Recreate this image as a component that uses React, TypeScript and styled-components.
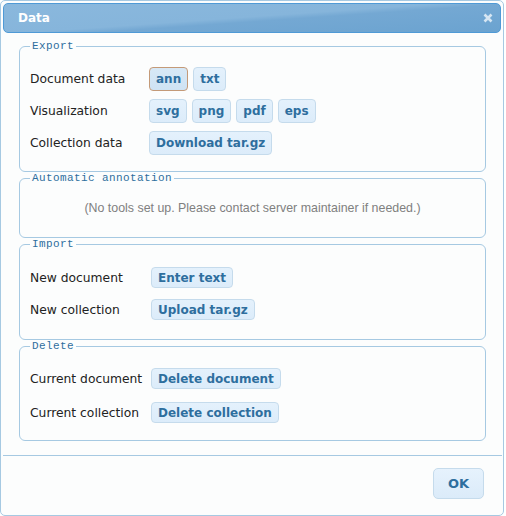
import React from "react";
import styled, { createGlobalStyle } from "styled-components";

const Global = createGlobalStyle`
  html, body { margin: 0; padding: 0; background: #ffffff; }
  body { font-family: "DejaVu Sans", Verdana, sans-serif; }
`;

const Dialog = styled.div`
  box-sizing: border-box;
  width: 504px;
  height: 516px;
  border: 1px solid #a6c9e2;
  border-radius: 5px;
  background: #fcfdfd;
  padding: 2px;
  display: flex;
  flex-direction: column;
`;

const TitleBar = styled.div`
  box-sizing: border-box;
  height: 30px;
  border: 1px solid #4f9ad6;
  border-radius: 5px;
  background: linear-gradient(176deg, #8ab8dd 0%, #86b5db 48%, #74a8d3 56%, #6ba3d0 100%);
  display: flex;
  align-items: center;
  justify-content: space-between;
  padding: 0 6px 0 14px;
`;

const Title = styled.span`
  color: #ffffff;
  font-weight: bold;
  font-size: 12px;
`;

const Close = styled.span`
  display: flex;
  width: 12px;
  height: 12px;
  align-items: center;
  justify-content: center;
`;

const Content = styled.div`
  flex: 1;
  display: flex;
  flex-direction: column;
  gap: 0;
  padding: 7px 15px 0 16px;
`;

const Fieldset = styled.fieldset<{ $height?: number; $pt: number; $pb: number }>`
  margin: 0;
  border: 1px solid #a6c9e2;
  border-radius: 6px;
  padding: ${(p) => p.$pt}px 10px ${(p) => p.$pb}px;
  min-width: 0;
  ${(p) => (p.$height ? `height: ${p.$height}px; box-sizing: border-box;` : "")}
`;

const Legend = styled.legend`
  font-family: "Liberation Mono", monospace;
  font-size: 11px;
  letter-spacing: 0.4px;
  color: #2e6e9e;
  padding: 0 2px;
  line-height: 13px;
`;

const Rows = styled.div<{ $label: number; $gap: number }>`
  display: grid;
  grid-template-columns: ${(p) => p.$label}px 1fr;
  row-gap: ${(p) => p.$gap}px;
  align-items: center;
`;

const Label = styled.span`
  font-size: 12.3px;
  color: #222222;
`;

const Buttons = styled.div`
  display: flex;
  gap: 5px;
`;

const Btn = styled.span<{ $active?: boolean; $tall?: boolean }>`
  box-sizing: border-box;
  display: inline-flex;
  align-items: center;
  height: ${(p) => (p.$tall ? 24 : 21)}px;
  padding: 0 6px;
  border: 1px solid ${(p) => (p.$active ? "#c49a78" : "#c5dbec")};
  border-radius: 4px;
  background: ${(p) =>
    p.$active
      ? "linear-gradient(#d7e8f6, #cfe3f4)"
      : "linear-gradient(#e4f1fc, #dcecfa)"};
  color: #2e6e9e;
  font-weight: bold;
  font-size: 12px;
  white-space: nowrap;
`;

const Note = styled.div`
  font-family: "Liberation Sans", Arial, sans-serif;
  font-size: 12.4px;
  color: #808080;
  text-align: center;
  padding-top: 8px;
`;

const Pane = styled.div`
  border-top: 1px solid #a6c9e2;
  margin: 0 -1px 0 0;
  height: 58px;
  box-sizing: border-box;
  display: flex;
  justify-content: flex-end;
  align-items: flex-start;
  padding: 12px 18px 0 0;
`;

const OkButton = styled.button`
  box-sizing: border-box;
  width: 51px;
  height: 31px;
  border: 1px solid #c5dbec;
  border-radius: 5px;
  background: linear-gradient(#e6f2fd, #dbebf9);
  color: #2e6e9e;
  font-family: "DejaVu Sans", Verdana, sans-serif;
  font-weight: bold;
  font-size: 13px;
  padding: 0;
`;

const CloseIcon = () => (
  <svg width="10" height="10" viewBox="0 0 10 10">
    <path d="M1.5 1.5 L8.5 8.5 M8.5 1.5 L1.5 8.5" stroke="#d6e6f3" strokeWidth="2.6" strokeLinecap="butt" />
  </svg>
);

export default function App() {
  return (
    <>
      <Global />
      <Dialog>
        <TitleBar>
          <Title>Data</Title>
          <Close>
            <CloseIcon />
          </Close>
        </TitleBar>
        <Content>
          <Fieldset $pt={14} $pb={16}>
            <Legend>Export</Legend>
            <Rows $label={119} $gap={8}>
              <Label>Document data</Label>
              <Buttons>
                <Btn $tall $active>ann</Btn>
                <Btn $tall>txt</Btn>
              </Buttons>
              <Label>Visualization</Label>
              <Buttons>
                <Btn $tall>svg</Btn>
                <Btn $tall>png</Btn>
                <Btn $tall>pdf</Btn>
                <Btn $tall>eps</Btn>
              </Buttons>
              <Label>Collection data</Label>
              <Buttons>
                <Btn $tall>Download tar.gz</Btn>
              </Buttons>
            </Rows>
          </Fieldset>
          <Fieldset $height={66} $pt={8} $pb={0}>
            <Legend>Automatic annotation</Legend>
            <Note>(No tools set up. Please contact server maintainer if needed.)</Note>
          </Fieldset>
          <Fieldset $pt={16} $pb={19}>
            <Legend>Import</Legend>
            <Rows $label={121} $gap={11}>
              <Label>New document</Label>
              <Buttons>
                <Btn>Enter text</Btn>
              </Buttons>
              <Label>New collection</Label>
              <Buttons>
                <Btn>Upload tar.gz</Btn>
              </Buttons>
            </Rows>
          </Fieldset>
          <Fieldset $pt={15} $pb={17}>
            <Legend>Delete</Legend>
            <Rows $label={121} $gap={13}>
              <Label>Current document</Label>
              <Buttons>
                <Btn>Delete document</Btn>
              </Buttons>
              <Label>Current collection</Label>
              <Buttons>
                <Btn>Delete collection</Btn>
              </Buttons>
            </Rows>
          </Fieldset>
        </Content>
        <Pane>
          <OkButton>OK</OkButton>
        </Pane>
      </Dialog>
    </>
  );
}
